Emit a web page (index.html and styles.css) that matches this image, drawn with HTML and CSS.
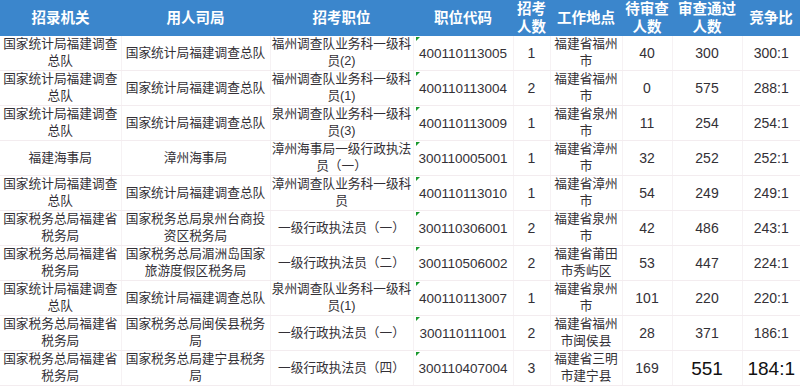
FILE: index.html
```html
<!DOCTYPE html>
<html lang="zh-CN">
<head>
  <meta charset="UTF-8" />
  <title>职位报名统计</title>
  <link rel="stylesheet" href="styles.css">
</head>
<body>
  <table class="stats">
    <colgroup>
      <col class="c-org"><col class="c-dept"><col class="c-pos"><col class="c-code"><col class="c-num">
      <col class="c-place"><col class="c-wait"><col class="c-pass"><col class="c-ratio">
    </colgroup>
    <thead>
      <tr>
        <th>招录机关</th>
        <th>用人司局</th>
        <th>招考职位</th>
        <th>职位代码</th>
        <th>招考<br>人数</th>
        <th>工作地点</th>
        <th>待审查<br>人数</th>
        <th>审查通过<br>人数</th>
        <th>竞争比</th>
      </tr>
    </thead>
    <tbody>
      <tr>
        <td>国家统计局福建调查总队</td>
        <td>国家统计局福建调查总队</td>
        <td>福州调查队业务科一级科员(2)</td>
        <td class="code">400110113005</td>
        <td>1</td>
        <td>福建省福州市</td>
        <td>40</td>
        <td>300</td>
        <td>300:1</td>
      </tr>
      <tr>
        <td>国家统计局福建调查总队</td>
        <td>国家统计局福建调查总队</td>
        <td>福州调查队业务科一级科员(1)</td>
        <td class="code">400110113004</td>
        <td>2</td>
        <td>福建省福州市</td>
        <td>0</td>
        <td>575</td>
        <td>288:1</td>
      </tr>
      <tr>
        <td>国家统计局福建调查总队</td>
        <td>国家统计局福建调查总队</td>
        <td>泉州调查队业务科一级科员(3)</td>
        <td class="code">400110113009</td>
        <td>1</td>
        <td>福建省泉州市</td>
        <td>11</td>
        <td>254</td>
        <td>254:1</td>
      </tr>
      <tr>
        <td>福建海事局</td>
        <td>漳州海事局</td>
        <td>漳州海事局一级行政执法员（一）</td>
        <td class="code">300110005001</td>
        <td>1</td>
        <td>福建省漳州市</td>
        <td>32</td>
        <td>252</td>
        <td>252:1</td>
      </tr>
      <tr>
        <td>国家统计局福建调查总队</td>
        <td>国家统计局福建调查总队</td>
        <td>漳州调查队业务科一级科员</td>
        <td class="code">400110113010</td>
        <td>1</td>
        <td>福建省漳州市</td>
        <td>54</td>
        <td>249</td>
        <td>249:1</td>
      </tr>
      <tr>
        <td>国家税务总局福建省税务局</td>
        <td>国家税务总局泉州台商投资区税务局</td>
        <td>一级行政执法员（一）</td>
        <td class="code">300110306001</td>
        <td>2</td>
        <td>福建省泉州市</td>
        <td>42</td>
        <td>486</td>
        <td>243:1</td>
      </tr>
      <tr>
        <td>国家税务总局福建省税务局</td>
        <td>国家税务总局湄洲岛国家旅游度假区税务局</td>
        <td>一级行政执法员（二）</td>
        <td class="code">300110506002</td>
        <td>2</td>
        <td>福建省莆田市秀屿区</td>
        <td>53</td>
        <td>447</td>
        <td>224:1</td>
      </tr>
      <tr>
        <td>国家统计局福建调查总队</td>
        <td>国家统计局福建调查总队</td>
        <td>泉州调查队业务科一级科员(1)</td>
        <td class="code">400110113007</td>
        <td>1</td>
        <td>福建省泉州市</td>
        <td>101</td>
        <td>220</td>
        <td>220:1</td>
      </tr>
      <tr>
        <td>国家税务总局福建省税务局</td>
        <td>国家税务总局闽侯县税务局</td>
        <td>一级行政执法员（一）</td>
        <td class="code">300110111001</td>
        <td>2</td>
        <td>福建省福州市闽侯县</td>
        <td>28</td>
        <td>371</td>
        <td>186:1</td>
      </tr>
      <tr>
        <td>国家税务总局福建省税务局</td>
        <td>国家税务总局建宁县税务局</td>
        <td>一级行政执法员（四）</td>
        <td class="code">300110407004</td>
        <td>3</td>
        <td>福建省三明市建宁县</td>
        <td>169</td>
        <td class="big">551</td>
        <td class="big">184:1</td>
      </tr>
    </tbody>
  </table>
</body>
</html>
```

FILE: styles.css
```css
body {
  margin: 0;
  background: #ffffff;
  font-family: "Liberation Sans", "Noto Sans CJK SC", sans-serif;
}

.stats {
  width: 800px;
  border-collapse: collapse;
  table-layout: fixed;
}

.c-org { width: 121px; }
.c-dept { width: 149px; }
.c-pos { width: 143px; }
.c-code { width: 100px; }
.c-num { width: 37px; }
.c-place { width: 72px; }
.c-wait { width: 50px; }
.c-pass { width: 70px; }
.c-ratio { width: 58px; }

.stats th {
  height: 36px;
  padding: 0;
  background: #3b86cc;
  color: #ffffff;
  font-size: 14.5px;
  font-weight: bold;
  line-height: 18px;
  text-align: center;
  vertical-align: middle;
}

.stats td {
  height: 34px;
  padding: 0;
  border-bottom: 1px solid #f3ecef;
  border-right: 1px solid #f6f2f4;
  color: #333036;
  font-size: 12.7px;
  line-height: 17px;
  text-align: center;
  vertical-align: middle;
}

.stats td:last-child {
  border-right: none;
}

.stats td.code {
  position: relative;
  font-size: 13.5px;
}

.stats td.code::before {
  content: "";
  position: absolute;
  left: 2px;
  top: 1px;
  border-top: 4px solid #1a9a2e;
  border-right: 4px solid transparent;
}

.stats td:nth-child(n+5) {
  font-size: 14px;
}

.stats td:nth-child(6) {
  font-size: 12.7px;
}

.stats td.big {
  color: #111111;
  font-size: 19px;
}
```
